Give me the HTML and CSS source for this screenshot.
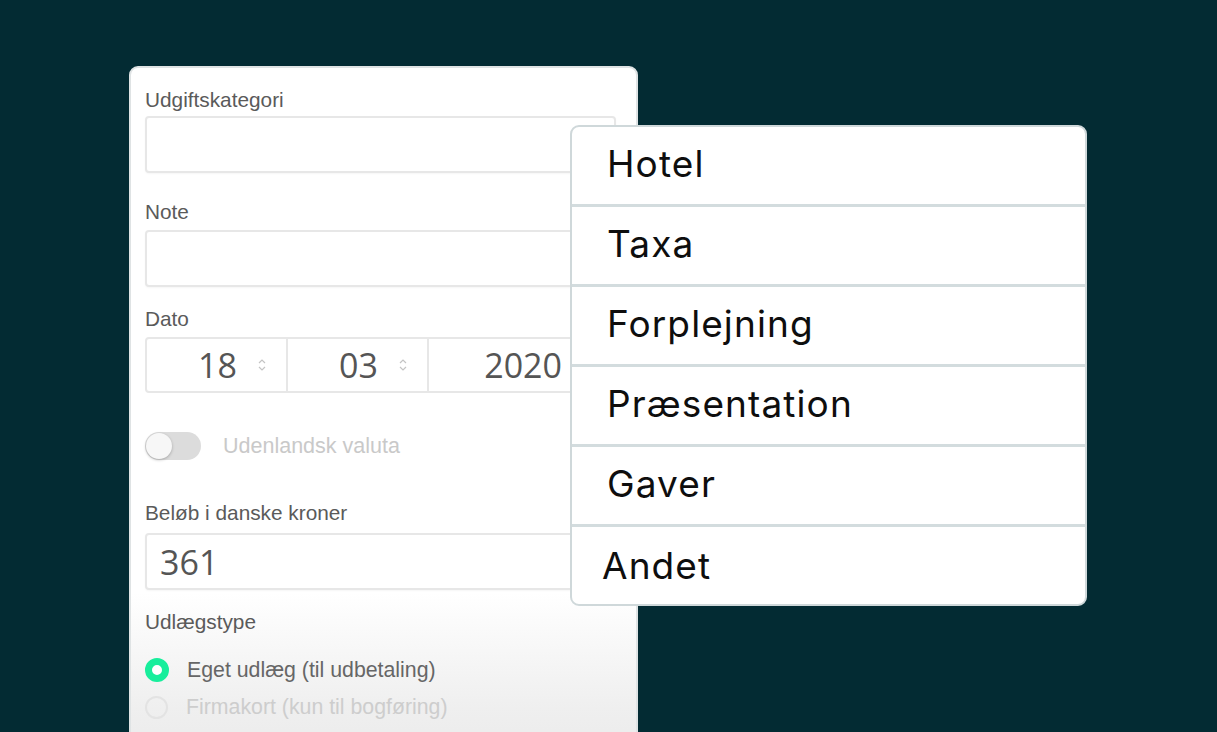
FILE: index.html
```html
<!DOCTYPE html>
<html lang="da">
<head>
<meta charset="utf-8">
<title>Udlæg</title>
<link rel="stylesheet" href="styles.css">
</head>
<body>
<div class="stage">
  <form class="card">
    <div class="label l-first">Udgiftskategori</div>
    <div class="input i-first"></div>

    <div class="label l-note">Note</div>
    <div class="input i-note"></div>

    <div class="label l-dato">Dato</div>
    <div class="date-row">
      <div class="date-box"><span class="num">18</span><svg class="step" viewBox="0 0 10 18" width="10" height="18"><path d="M2 7 L5 4 L8 7 M2 11 L5 14 L8 11" fill="none" stroke="#c4c4c4" stroke-width="1.2"/></svg></div>
      <div class="date-box"><span class="num">03</span><svg class="step" viewBox="0 0 10 18" width="10" height="18"><path d="M2 7 L5 4 L8 7 M2 11 L5 14 L8 11" fill="none" stroke="#c4c4c4" stroke-width="1.2"/></svg></div>
      <div class="date-box wide"><span class="num">2020</span><svg class="step" viewBox="0 0 10 18" width="10" height="18"><path d="M2 7 L5 4 L8 7 M2 11 L5 14 L8 11" fill="none" stroke="#c4c4c4" stroke-width="1.2"/></svg></div>
    </div>

    <div class="toggle-row">
      <span class="toggle"><span class="knob"></span></span>
      <span class="toggle-label">Udenlandsk valuta</span>
    </div>

    <div class="label l-belob">Beløb i danske kroner</div>
    <div class="input amount"><span class="num">361</span></div>

    <div class="label l-type">Udlægstype</div>
    <div class="radio-row r-first">
      <span class="radio on"></span>
      <span class="radio-label">Eget udlæg (til udbetaling)</span>
    </div>
    <div class="radio-row r-second">
      <span class="radio off"></span>
      <span class="radio-label dim">Firmakort (kun til bogføring)</span>
    </div>
  </form>

  <ul class="dropdown">
    <li class="opt">Hotel</li>
    <li class="opt">Taxa</li>
    <li class="opt">Forplejning</li>
    <li class="opt">Præsentation</li>
    <li class="opt">Gaver</li>
    <li class="opt last">Andet</li>
  </ul>
</div>
</body>
</html>
```

FILE: styles.css
```css
html, body {
  margin: 0;
  padding: 0;
  height: 100%;
}
body {
  background: #032b33;
  overflow: hidden;
  font-family: "Liberation Sans", Arial, sans-serif;
}
.stage {
  position: relative;
  width: 1217px;
  height: 732px;
  padding: 66px 0 0 129px;
  box-sizing: border-box;
  overflow: hidden;
}
.card {
  display: flex;
  flex-direction: column;
  width: 509px;
  height: 720px;
  box-sizing: border-box;
  padding: 0 20px 0 14px;
  border: 2px solid #dfe3e4;
  border-radius: 9px;
  background: linear-gradient(to bottom, #ffffff 0px, #ffffff 525px, #efefef 640px, #e8e8e8 720px);
}
.card > * { flex: none; }
.label {
  font-size: 20.8px;
  line-height: 24px;
  color: #5a5a5a;
  height: 24px;
}
.l-first { margin-top: 20px; }
.l-note { margin-top: 27px; }
.l-dato { margin-top: 20px; }
.l-belob { margin-top: 40px; }
.l-type { margin-top: 20px; }
.i-first { margin-top: 4px; }
.i-note { margin-top: 6px; }

.input {
  height: 57px;
  box-sizing: border-box;
  border: 2px solid #e7e7e7;
  border-radius: 4px;
  background: #fff;
  box-shadow: 0 1px 2px rgba(0,0,0,0.04);
}
.amount {
  display: flex;
  align-items: center;
  margin-top: 8px;
  padding-left: 13px;
}
.num {
  font-family: "Open Sans", "Noto Sans", sans-serif;
  font-weight: 400;
  font-size: 34px;
  color: #555555;
}
.date-row {
  display: flex;
  height: 56px;
  margin-top: 6px;
}
.date-box {
  width: 143px;
  flex: none;
  box-sizing: border-box;
  border: 2px solid #e7e7e7;
  margin-left: -2px;
  display: flex;
  align-items: center;
  justify-content: flex-end;
  gap: 20px;
  padding-right: 19px;
  background: #fff;
}
.date-box:first-child {
  margin-left: 0;
  border-radius: 4px 0 0 4px;
}
.date-box.wide {
  width: 186px;
}

.toggle-row {
  display: flex;
  align-items: center;
  height: 30px;
  margin-top: 38px;
}
.toggle {
  position: relative;
  width: 56px;
  height: 28px;
  border-radius: 14px;
  background: #dcdcdc;
  flex: none;
}
.knob {
  position: absolute;
  left: 1px;
  top: 1px;
  width: 26px;
  height: 26px;
  border-radius: 50%;
  background: #f7f7f7;
  box-shadow: 0 1px 3px rgba(0,0,0,0.25);
}
.toggle-label {
  margin-left: 22px;
  font-size: 21.5px;
  color: #c9c9c9;
}

.radio-row {
  display: flex;
  align-items: center;
  height: 26px;
}
.r-first { margin-top: 23px; }
.r-second { margin-top: 11px; }
.radio {
  width: 24px;
  height: 24px;
  border-radius: 50%;
  box-sizing: border-box;
  flex: none;
}
.radio.on {
  border: 7px solid #18ee9c;
  background: #fff;
}
.radio.off {
  width: 23px;
  height: 23px;
  border: 2px solid #e3e3e3;
}
.radio-label {
  margin-left: 18px;
  font-size: 21.3px;
  color: #666666;
}
.radio-label.dim {
  color: #cdcdcd;
}

.dropdown {
  position: absolute;
  left: 570px;
  top: 125px;
  width: 517px;
  margin: 0;
  padding: 0;
  list-style: none;
  background: #fff;
  border: 2px solid #cfd8da;
  border-radius: 9px;
  box-sizing: border-box;
  overflow: hidden;
}
.opt {
  height: 80px;
  box-sizing: border-box;
  border-bottom: 3px solid #d3dcde;
  padding-left: 35px;
  padding-bottom: 4px;
  display: flex;
  align-items: center;
  font-family: "Inter", "Noto Sans", sans-serif;
  font-size: 37px;
  color: #0e0e0e;
  letter-spacing: 1.1px;
}
.opt.last {
  border-bottom: none;
  height: 77px;
  padding-left: 30px;
  padding-bottom: 0;
}
```
